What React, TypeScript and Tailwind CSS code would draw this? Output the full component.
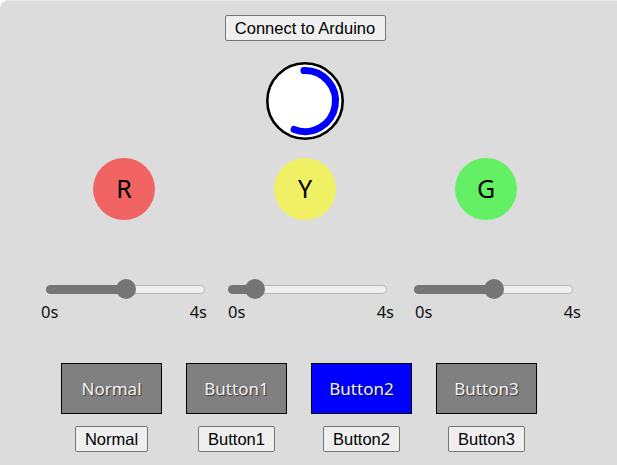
import React from "react";

const sans = "font-['Noto_Sans','Open_Sans',sans-serif]";
const arial = "font-['Liberation_Sans',Arial,sans-serif]";

function Slider({ value, offset }: { value: number; offset: string }) {
  const trackW = 159;
  const thumb = 20;
  const center = thumb / 2 + (trackW - thumb) * value;
  return (
    <div className="w-[166px] flex flex-col">
      <div className={`relative h-[20px] w-[159px] ${offset}`}>
        <div className="absolute left-0 top-[5.5px] h-[9px] w-[159px] rounded-full bg-[#efefef] border border-[#b5b5b5]" />
        <div
          className="absolute left-0 top-[5.5px] h-[9px] rounded-l-full bg-[#757575]"
          style={{ width: center }}
        />
        <div
          className="absolute top-0 h-[20px] w-[20px] rounded-full bg-[#757575]"
          style={{ left: center - thumb / 2 }}
        />
      </div>
      <div className={`mt-[2px] flex justify-between text-[16.5px] leading-[22px] text-[#111] ${sans}`}>
        <span>0s</span>
        <span>4s</span>
      </div>
    </div>
  );
}

function ModeBox({ label, active }: { label: string; active?: boolean }) {
  return (
    <div className="w-[101px] flex flex-col items-center">
      <div
        className={`w-[101px] h-[51px] border border-black flex items-center justify-center text-[17px] text-[#f2f2f2] [text-shadow:1px_1px_1px_rgba(0,0,0,0.6)] ${sans} ${
          active ? "bg-[#0000ff]" : "bg-[#808080]"
        }`}
      >
        {label}
      </div>
      <button
        className={`mt-[12px] h-[26px] px-[9px] border border-[#767676] rounded-[2px] bg-[#efefef] text-[16.5px] leading-[18px] text-black ${arial}`}
      >
        {label}
      </button>
    </div>
  );
}

export default function App() {
  return (
    <div className="w-[617px] h-[465px] bg-white">
      <div className="w-[617px] h-[465px] bg-[#dcdcdc] rounded-tl-[8px] border-t border-[#e6e6ec] overflow-hidden">
        <div className="w-[610px] flex flex-col items-center pt-[14px]">
          <button
            className={`w-[161px] h-[26px] border border-[#767676] rounded-[2px] bg-[#efefef] text-[16.5px] leading-[18px] text-black ${arial}`}
          >
            Connect to Arduino
          </button>

          <div className="mt-[21px] w-[78px] h-[78px]">
            <svg width="78" height="78" viewBox="0 0 78 78">
              <circle cx="39" cy="39" r="37.7" fill="#ffffff" stroke="#000000" strokeWidth="2.6" />
              <path
                d="M37.94 8.52 A30.5 30.5 0 1 1 28.07 67.47"
                fill="none"
                stroke="#0000ff"
                strokeWidth="7"
                strokeLinecap="round"
              />
            </svg>
          </div>

          <div className={`mt-[18px] w-[543px] grid grid-cols-3 justify-items-center text-[25px] text-black ${sans}`}>
            <div className="w-[62px] h-[62px] rounded-full bg-[#f26464] flex items-center justify-center">R</div>
            <div className="w-[62px] h-[62px] rounded-full bg-[#f0f064] flex items-center justify-center">Y</div>
            <div className="w-[62px] h-[62px] rounded-full bg-[#64f064] flex items-center justify-center">G</div>
          </div>

          <div className="self-start ml-[41px] mt-[59px] flex gap-[21px]">
            <Slider value={0.5} offset="ml-[5px]" />
            <Slider value={0.125} offset="ml-0" />
            <Slider value={0.5} offset="-ml-px" />
          </div>

          <div className="self-start ml-[61px] mt-[40px] flex gap-[24px]">
            <ModeBox label="Normal" />
            <ModeBox label="Button1" />
            <ModeBox label="Button2" active />
            <ModeBox label="Button3" />
          </div>
        </div>
      </div>
    </div>
  );
}
